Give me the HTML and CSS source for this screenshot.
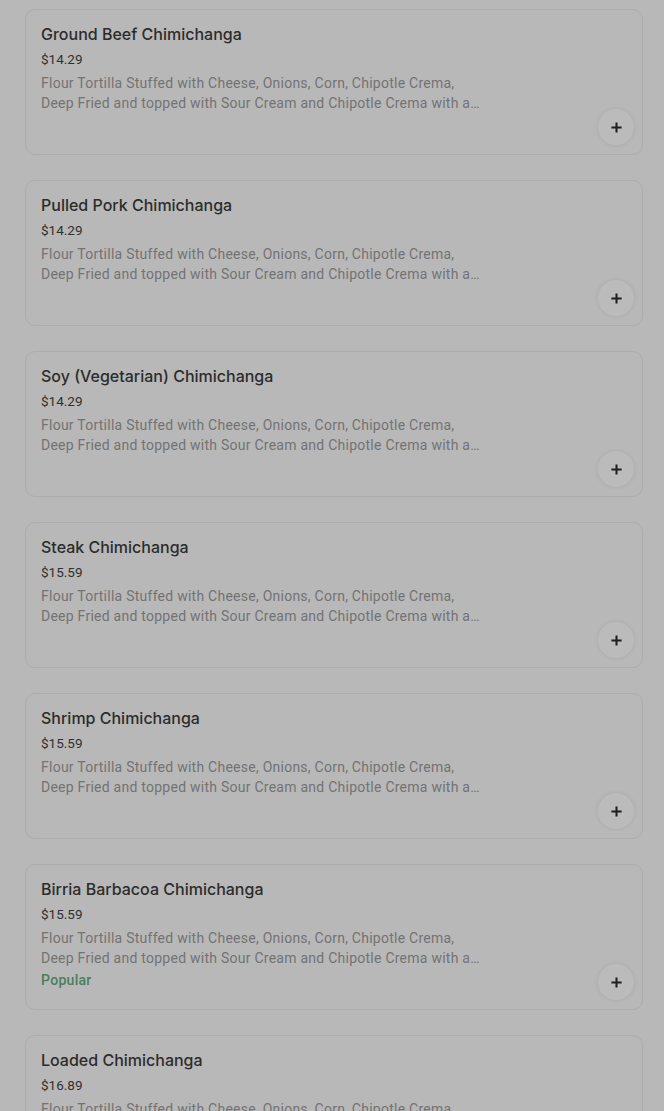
FILE: index.html
```html
<!DOCTYPE html>
<html>
<head>
<meta charset="utf-8">
<link rel="stylesheet" href="styles.css">
</head>
<body>
<ul class="list">
  <li class="card">
    <div class="info">
      <h3 class="title">Ground Beef Chimichanga</h3>
      <div class="price">$14.29</div>
      <p class="desc">Flour Tortilla Stuffed with Cheese, Onions, Corn, Chipotle Crema, Deep Fried and topped with Sour Cream and Chipotle Crema with a side of rice and beans</p>
    </div>
    <button class="add"><svg width="14" height="14" viewBox="0 0 14 14"><path d="M7 1.5v11M1.5 7h11" stroke="#1f1f1f" stroke-width="2.2"/></svg></button>
  </li>
  <li class="card">
    <div class="info">
      <h3 class="title">Pulled Pork Chimichanga</h3>
      <div class="price">$14.29</div>
      <p class="desc">Flour Tortilla Stuffed with Cheese, Onions, Corn, Chipotle Crema, Deep Fried and topped with Sour Cream and Chipotle Crema with a side of rice and beans</p>
    </div>
    <button class="add"><svg width="14" height="14" viewBox="0 0 14 14"><path d="M7 1.5v11M1.5 7h11" stroke="#1f1f1f" stroke-width="2.2"/></svg></button>
  </li>
  <li class="card">
    <div class="info">
      <h3 class="title">Soy (Vegetarian) Chimichanga</h3>
      <div class="price">$14.29</div>
      <p class="desc">Flour Tortilla Stuffed with Cheese, Onions, Corn, Chipotle Crema, Deep Fried and topped with Sour Cream and Chipotle Crema with a side of rice and beans</p>
    </div>
    <button class="add"><svg width="14" height="14" viewBox="0 0 14 14"><path d="M7 1.5v11M1.5 7h11" stroke="#1f1f1f" stroke-width="2.2"/></svg></button>
  </li>
  <li class="card">
    <div class="info">
      <h3 class="title">Steak Chimichanga</h3>
      <div class="price">$15.59</div>
      <p class="desc">Flour Tortilla Stuffed with Cheese, Onions, Corn, Chipotle Crema, Deep Fried and topped with Sour Cream and Chipotle Crema with a side of rice and beans</p>
    </div>
    <button class="add"><svg width="14" height="14" viewBox="0 0 14 14"><path d="M7 1.5v11M1.5 7h11" stroke="#1f1f1f" stroke-width="2.2"/></svg></button>
  </li>
  <li class="card">
    <div class="info">
      <h3 class="title">Shrimp Chimichanga</h3>
      <div class="price">$15.59</div>
      <p class="desc">Flour Tortilla Stuffed with Cheese, Onions, Corn, Chipotle Crema, Deep Fried and topped with Sour Cream and Chipotle Crema with a side of rice and beans</p>
    </div>
    <button class="add"><svg width="14" height="14" viewBox="0 0 14 14"><path d="M7 1.5v11M1.5 7h11" stroke="#1f1f1f" stroke-width="2.2"/></svg></button>
  </li>
  <li class="card">
    <div class="info">
      <h3 class="title">Birria Barbacoa Chimichanga</h3>
      <div class="price">$15.59</div>
      <p class="desc">Flour Tortilla Stuffed with Cheese, Onions, Corn, Chipotle Crema, Deep Fried and topped with Sour Cream and Chipotle Crema with a side of rice and beans</p>
      <div class="popular">Popular</div>
    </div>
    <button class="add"><svg width="14" height="14" viewBox="0 0 14 14"><path d="M7 1.5v11M1.5 7h11" stroke="#1f1f1f" stroke-width="2.2"/></svg></button>
  </li>
  <li class="card">
    <div class="info">
      <h3 class="title">Loaded Chimichanga</h3>
      <div class="price">$16.89</div>
      <p class="desc">Flour Tortilla Stuffed with Cheese, Onions, Corn, Chipotle Crema, Deep Fried and topped with Sour Cream and Chipotle Crema with a side of rice and beans</p>
    </div>
    <button class="add"><svg width="14" height="14" viewBox="0 0 14 14"><path d="M7 1.5v11M1.5 7h11" stroke="#1f1f1f" stroke-width="2.2"/></svg></button>
  </li>
</ul>
</body>
</html>
```
FILE: styles.css
```css
html, body {
  margin: 0;
  padding: 0;
  background: #b8b8b8;
  font-family: Roboto, Inter, "Noto Sans", sans-serif;
}
.list {
  list-style: none;
  margin: 0;
  padding: 9px 21px 0 25px;
  display: flex;
  flex-direction: column;
  gap: 25px;
}
.card {
  position: relative;
  box-sizing: border-box;
  height: 146px;
  border: 1px solid #adadad;
  border-radius: 10px;
  padding: 12px 16px 0 15px;
  display: flex;
}
.info {
  width: 440px;
}
.title {
  margin: 0;
  font-family: Inter, Roboto, sans-serif;
  font-size: 16px;
  font-weight: 500;
  line-height: 24px;
  color: #2c2c2c;
}
.price {
  margin-top: 3px;
  font-size: 13.5px;
  line-height: 20px;
  color: #303030;
}
.desc {
  margin: 4px 0 0;
  font-size: 14px;
  line-height: 20px;
  letter-spacing: 0.25px;
  color: #737373;
  display: -webkit-box;
  -webkit-line-clamp: 2;
  -webkit-box-orient: vertical;
  overflow: hidden;
}
.popular {
  margin-top: 2px;
  font-size: 14px;
  line-height: 20px;
  letter-spacing: 0.3px;
  font-weight: 500;
  color: #4b7d5e;
}
.add {
  position: absolute;
  right: 8px;
  bottom: 9px;
  width: 36px;
  height: 36px;
  border-radius: 50%;
  border: none;
  padding: 0;
  background: #bbbbbb;
  box-shadow: 0 0 5px rgba(0,0,0,0.08);
  display: flex;
  align-items: center;
  justify-content: center;
}
.add svg {
  width: 13px;
  height: 13px;
}
```
